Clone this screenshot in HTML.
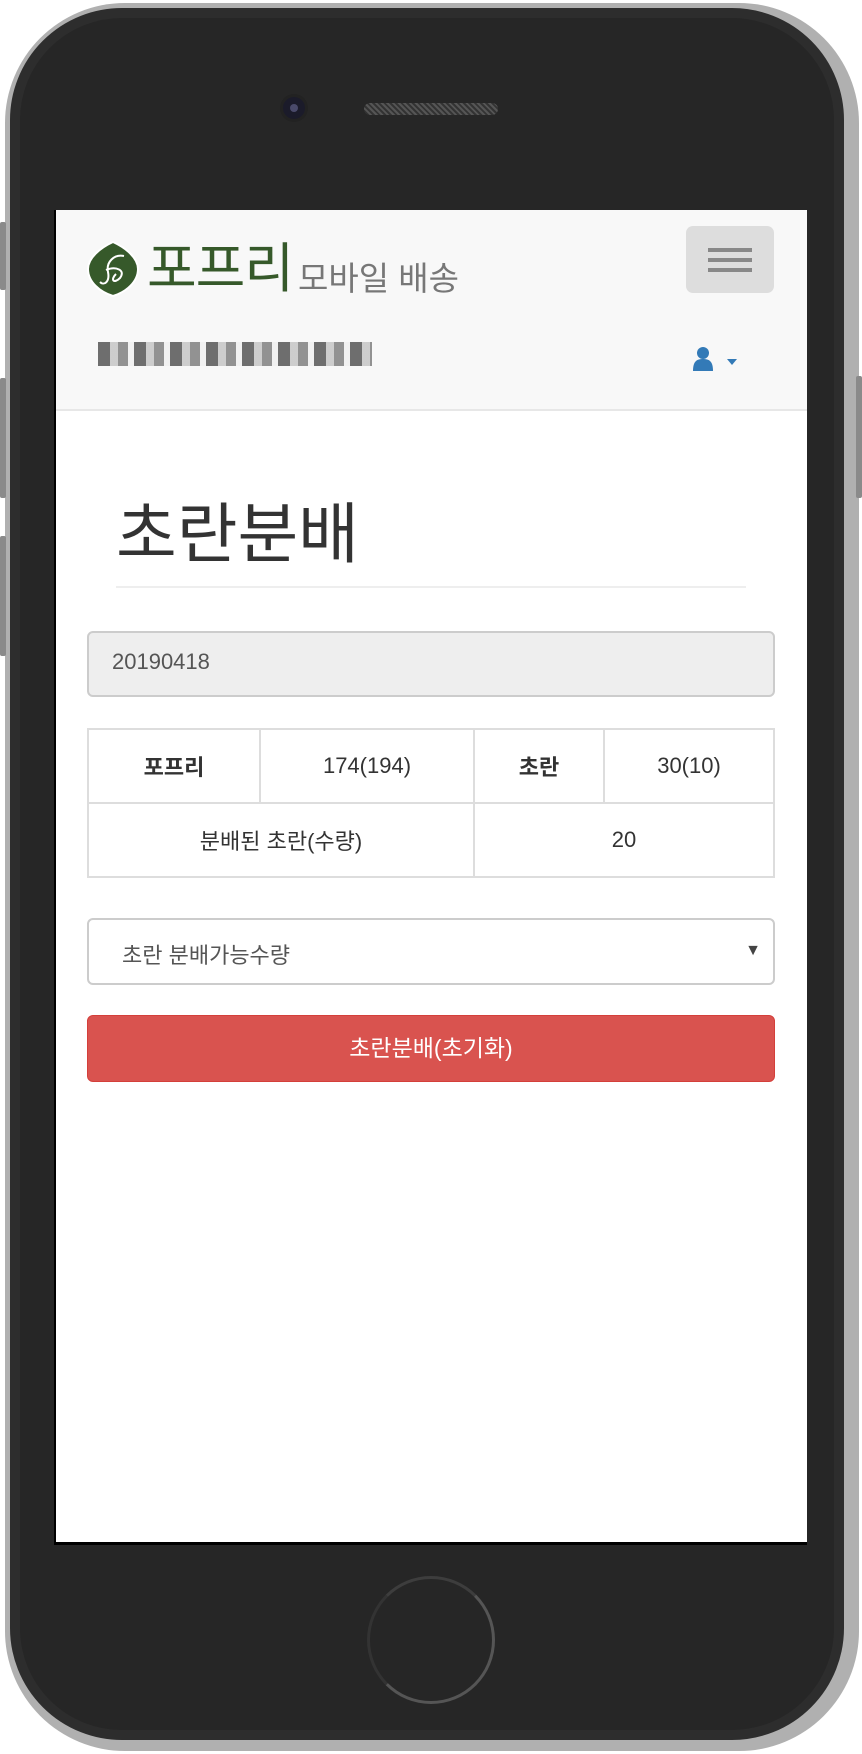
<!DOCTYPE html>
<html><head><meta charset="utf-8">
<style>
*{box-sizing:border-box;margin:0;padding:0}
html,body{width:862px;height:1754px;background:#fff;overflow:hidden;font-family:"Liberation Sans","Noto Sans CJK KR",sans-serif}
.phone{position:absolute;left:5px;top:3px;width:854px;height:1748px;border-radius:120px;background:#b0b0b0}
.body{position:absolute;left:10px;top:8px;width:834px;height:1732px;border-radius:112px;background:#262626;border:10px solid #2d2d2d}
.side{position:absolute;background:#8a8a8a;width:6px;border-radius:2px}
.screen{position:absolute;left:54px;top:210px;width:753px;height:1335px;background:#fff;border-bottom:3px solid #000;border-left:2px solid #000;overflow:hidden}
.nav{position:absolute;left:0;top:0;width:100%;height:201px;background:#f8f8f8;border-bottom:2px solid #e7e7e7}
.cam{position:absolute;left:283px;top:97px;width:22px;height:22px;border-radius:50%;background:#1b1b2a;box-shadow:0 0 0 3px #222}
.cam:after{content:"";position:absolute;left:7px;top:7px;width:8px;height:8px;border-radius:50%;background:#4a4a6a}
.spk{position:absolute;left:364px;top:103px;width:134px;height:12px;border-radius:6px;background:repeating-linear-gradient(45deg,#555 0 2px,#333 2px 4px)}
.home{position:absolute;left:367px;top:1576px;width:128px;height:128px;border-radius:50%;border:3px solid #555;border-left-color:#333;border-top-color:#3d3d3d}
td{border:2px solid #ddd;text-align:center;font-size:22px;color:#333;height:74px}
</style></head><body>
<div class="phone"></div>
<div class="side" style="left:0;top:222px;height:68px"></div>
<div class="side" style="left:0;top:378px;height:120px"></div>
<div class="side" style="left:0;top:536px;height:120px"></div>
<div class="side" style="left:856px;top:376px;height:122px"></div>
<div class="body"></div>
<div class="cam"></div><div class="spk"></div>
<div class="home"></div>
<div class="screen">
 <div class="nav">
  <svg style="position:absolute;left:30px;top:30px" width="54" height="58" viewBox="0 0 54 58"><path d="M27 2 C40 8 52 18 52 29 C52 42 40 52 27 56 C14 52 2 42 2 29 C2 18 14 8 27 2Z" fill="#36592a" stroke="#fff" stroke-width="2"/><path d="M38 16 C28 14 20 22 22 32 C24 42 18 46 14 42 M20 30 C30 26 40 30 34 38 C28 44 24 40 30 34" fill="none" stroke="#fff" stroke-width="2"/></svg>
  <div style="position:absolute;left:91px;top:14px;font-size:54px;color:#36592a;font-weight:normal;letter-spacing:-1px">포프리</div>
  <div style="position:absolute;left:242px;top:42px;font-size:33px;color:#777">모바일 배송</div>
  <div style="position:absolute;left:630px;top:16px;width:88px;height:67px;background:#ddd;border-radius:7px">
   <div style="position:absolute;left:22px;top:22px;width:44px;height:4px;background:#888"></div>
   <div style="position:absolute;left:22px;top:32px;width:44px;height:4px;background:#888"></div>
   <div style="position:absolute;left:22px;top:42px;width:44px;height:4px;background:#888"></div>
  </div>
  <div style="position:absolute;left:42px;top:132px;width:274px;height:24px;background:repeating-linear-gradient(90deg,#333 0 12px,#bbb 12px 20px,#666 20px 30px,#eee 30px 36px);opacity:.7"></div>
  <svg style="position:absolute;left:637px;top:137px" width="44" height="26" viewBox="0 0 44 26"><circle cx="10" cy="6" r="6" fill="#337ab7"/><path d="M0 24 C0 14 4 12 10 12 C16 12 20 14 20 24Z" fill="#337ab7"/><path d="M34 12 L44 12 L39 18Z" fill="#337ab7"/></svg>
 </div>
 <div style="position:absolute;left:60px;top:271px;font-size:66px;color:#333">초란분배</div>
 <div style="position:absolute;left:60px;top:376px;width:630px;height:2px;background:#eee"></div>
 <div style="position:absolute;left:31px;top:421px;width:688px;height:66px;background:#eee;border:2px solid #ccc;border-radius:6px;font-size:22px;color:#555;padding:16px 23px">20190418</div>
 <table style="position:absolute;left:31px;top:518px;width:688px;border-collapse:collapse">
  <tr><td style="width:172px;font-weight:bold">포프리</td><td style="width:214px">174(194)</td><td style="width:130px;font-weight:bold">초란</td><td>30(10)</td></tr>
  <tr><td colspan="2">분배된 초란(수량)</td><td colspan="2">20</td></tr>
 </table>
 <div style="position:absolute;left:31px;top:708px;width:688px;height:67px;border:2px solid #ccc;border-radius:6px;font-size:22px;color:#555;padding:18px 33px">초란 분배가능수량<span style="position:absolute;right:12px;top:22px;font-size:16px;color:#444">▼</span></div>
 <div style="position:absolute;left:31px;top:805px;width:688px;height:67px;background:#d9534f;border:1px solid #d43f3a;border-radius:6px;font-size:23px;color:#fff;text-align:center;line-height:65px">초란분배(초기화)</div>
</div>
</body></html>
